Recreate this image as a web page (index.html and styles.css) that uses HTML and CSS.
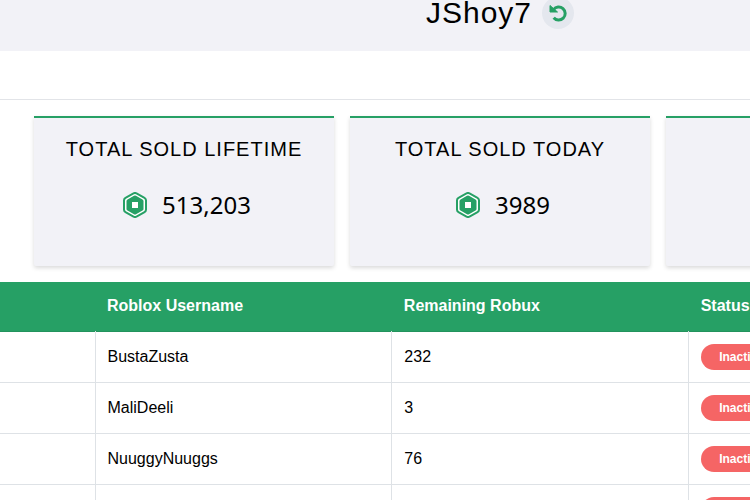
FILE: index.html
```html
<!DOCTYPE html>
<html lang="en">
<head>
    <meta charset="UTF-8">
    <meta name="viewport" content="width=device-width, initial-scale=1.0">
    <title>JShoy7</title>
    <link rel="stylesheet" href="styles.css">
</head>
<body>
    <!-- Robux icon, reused by the stat cards -->
    <svg class="sprite" aria-hidden="true">
        <symbol id="robux" viewBox="0 0 24 26">
            <path d="M10.5 1.4a3 3 0 0 1 3 0l8 4.4a3 3 0 0 1 1.5 2.7v9a3 3 0 0 1-1.5 2.7l-8 4.4a3 3 0 0 1-3 0l-8-4.4A3 3 0 0 1 1 17.5v-9a3 3 0 0 1 1.5-2.7z" fill="#fff" stroke="#26a065" stroke-width="2"/>
            <path fill-rule="evenodd" fill="#26a065" d="M11 3.8a2 2 0 0 1 2 0l6.500 3.600a2 2 0 0 1 1 1.700v7.800a2 2 0 0 1-1 1.700l-6.500 3.600a2 2 0 0 1-2 0l-6.500-3.600a2 2 0 0 1-1-1.700V9.100a2 2 0 0 1 1-1.700zM9 10v6h6v-6z"/>
        </symbol>
    </svg>

    <div class="page">
        <header class="profile">
            <h1>JShoy7</h1>
            <button class="refresh-btn" type="button" aria-label="Refresh">
                <svg viewBox="0 0 18 18" width="18" height="18" aria-hidden="true">
                    <path d="M4.5 5.6A6.5 6.5 0 1 1 4.7 13.7" fill="none" stroke="#26a065" stroke-width="3"/>
                    <path d="M1 1.5v6.5h7.5z" fill="#26a065" stroke="#26a065" stroke-linejoin="round"/>
                </svg>
            </button>
        </header>

        <div class="toolbar"></div>

        <!-- Stats -->
        <section class="cards">
            <div class="card">
                <h2>TOTAL SOLD LIFETIME</h2>
                <p class="amount"><svg class="robux" aria-hidden="true"><use href="#robux"/></svg>513,203</p>
            </div>
            <div class="card">
                <h2>TOTAL SOLD TODAY</h2>
                <p class="amount"><svg class="robux" aria-hidden="true"><use href="#robux"/></svg>3989</p>
            </div>
            <div class="card"></div>
        </section>

        <!-- Accounts -->
        <table class="accounts">
            <thead>
                <tr>
                    <th class="col-first"></th>
                    <th class="col">Roblox Username</th>
                    <th class="col">Remaining Robux</th>
                    <th>Status</th>
                </tr>
            </thead>
            <tbody>
                <tr>
                    <td></td>
                    <td>BustaZusta</td>
                    <td>232</td>
                    <td><span class="status">Inactive</span></td>
                </tr>
                <tr>
                    <td></td>
                    <td>MaliDeeli</td>
                    <td>3</td>
                    <td><span class="status">Inactive</span></td>
                </tr>
                <tr>
                    <td></td>
                    <td>NuuggyNuuggs</td>
                    <td>76</td>
                    <td><span class="status">Inactive</span></td>
                </tr>
                <tr>
                    <td></td>
                    <td></td>
                    <td></td>
                    <td><span class="status">Inactive</span></td>
                </tr>
            </tbody>
        </table>
    </div>
</body>
</html>
```

FILE: styles.css
```css
* {
    box-sizing: border-box;
}
body {
    font-family: "Liberation Sans", Arial, sans-serif;
    margin: 0;
    color: #000;
    background-color: #fff;
    overflow: hidden;
}
.sprite {
    display: none;
}
.page {
    min-width: 1000px;
}
.profile {
    display: flex;
    justify-content: center;
    align-items: center;
    gap: 10px;
    height: 51px;
    padding-bottom: 25px;
    background-color: #f2f2f7;
}
.profile h1 {
    margin: 0;
    font-size: 30px;
    font-weight: normal;
    line-height: 32px;
    letter-spacing: 1px;
}
.refresh-btn {
    display: flex;
    justify-content: center;
    align-items: center;
    width: 32px;
    height: 32px;
    padding: 0;
    border: none;
    border-radius: 50%;
    background-color: #e4e7ee;
    cursor: pointer;
}
.toolbar {
    height: 49px;
    border-bottom: 1px solid #e2e4e8;
}
.cards {
    display: flex;
    justify-content: center;
    gap: 16px;
    padding: 16px;
}
.card {
    width: 300px;
    min-height: 150px;
    padding-top: 19px;
    text-align: center;
    background-color: #f2f2f7;
    border-top: 2px solid #26a065;
    border-radius: 0 0 2px 2px;
    box-shadow: 0 2px 4px rgba(0, 0, 0, 0.15);
}
.card h2 {
    margin: 0;
    font-size: 20px;
    font-weight: normal;
    line-height: 24px;
    letter-spacing: 1px;
}
.amount {
    display: flex;
    justify-content: center;
    align-items: center;
    gap: 15px;
    margin: 28px 0 0;
    padding-left: 6px;
    font-family: "Noto Sans", sans-serif;
    font-size: 24px;
    line-height: 32px;
}
.robux {
    width: 24px;
    height: 26px;
}
.accounts {
    width: 100%;
    table-layout: fixed;
    border-collapse: collapse;
}
.accounts th,
.accounts td {
    padding: 0 12px;
    text-align: left;
    font-size: 16px;
}
.accounts th {
    height: 49px;
    color: #fff;
    background-color: #26a065;
}
.accounts td {
    height: 51px;
    border: 1px solid #dee2e6;
}
.accounts tr:first-child td {
    border-top: 1px solid #23935d;
}
.accounts td:first-child {
    border-left: none;
}
.accounts .col-first {
    width: 95px;
}
.col {
    width: 29.7%;
}
.status {
    display: inline-block;
    padding: 0 18px;
    font-size: 12px;
    font-weight: bold;
    line-height: 26px;
    color: #fff;
    background-color: #f56565;
    border-radius: 13px;
    vertical-align: middle;
}
```
